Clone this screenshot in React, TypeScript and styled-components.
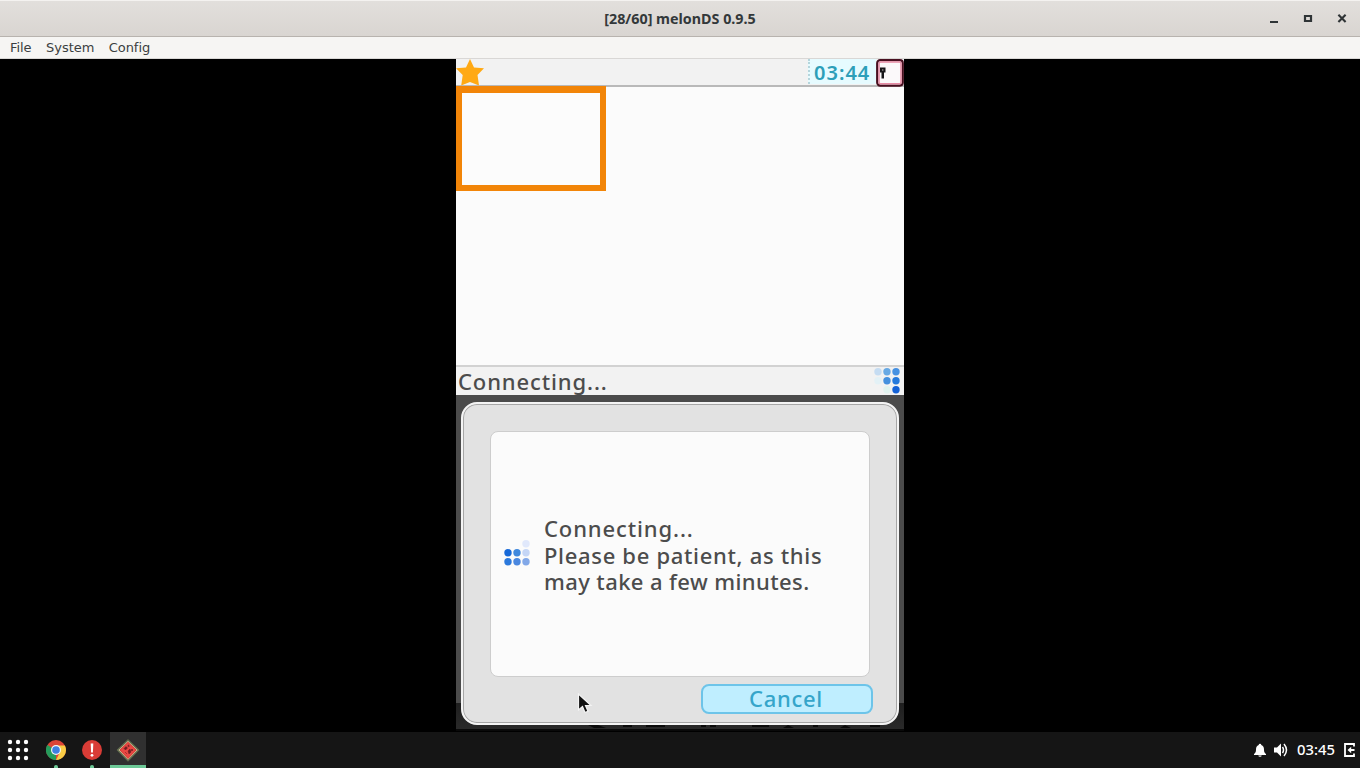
import React from 'react';
import styled, { createGlobalStyle } from 'styled-components';

const GlobalStyle = createGlobalStyle`
  * {
    box-sizing: border-box;
  }

  body {
    margin: 0;
    background: #000;
    overflow: hidden;
  }
`;

const Desktop = styled.div`
  position: relative;
  width: 1360px;
  height: 768px;
  display: flex;
  flex-direction: column;
  background: #000;
`;

const TitleBar = styled.header`
  height: 37px;
  flex-shrink: 0;
  display: grid;
  grid-template-columns: 1fr auto 1fr;
  align-items: center;
  background: linear-gradient(#e2dfdc, #d9d5d1);
  border-top: 1px solid #f4f2f0;
  border-bottom: 1px solid #b8b3ae;
`;

const WindowTitle = styled.h1`
  grid-column: 2;
  margin: 0;
  font: 700 14.3px/34px 'Noto Sans', sans-serif;
  color: #33383a;
  white-space: nowrap;
`;

const WindowButtons = styled.div`
  display: flex;
  justify-content: flex-end;
  gap: 22px;
  padding-right: 12px;

  svg {
    display: block;
  }
`;

const MenuBar = styled.nav`
  height: 22px;
  flex-shrink: 0;
  display: flex;
  gap: 14.5px;
  padding-left: 10px;
  background: #f6f5f3;
  border-bottom: 1px solid #d9d7d5;
`;

const MenuItem = styled.span`
  font: 13px/21px 'DejaVu Sans', sans-serif;
  letter-spacing: -0.05px;
  color: #3b3e40;
`;

const Viewport = styled.main`
  height: 673px;
  display: flex;
  flex-direction: column;
  align-items: center;
  background: #000;
`;

const TopScreen = styled.section`
  width: 448px;
  height: 336px;
  display: flex;
  flex-direction: column;
  background: #fbfbfb;
`;

const StatusBar = styled.div`
  height: 28px;
  display: flex;
  flex-shrink: 0;
  background: #f2f2f2;
  border-bottom: 2px solid #b9b9b9;

  svg {
    display: block;
    flex-shrink: 0;
  }
`;

const Clock = styled.div`
  width: 68px;
  height: 25px;
  margin-left: auto;
  padding-left: 4px;
  background: #e6fbff;
  border-left: 2px dotted #b5d5dc;
  color: #2d9fb9;
  font: 600 20px/27px 'Noto Sans', sans-serif;
  letter-spacing: 1px;
  white-space: nowrap;
`;

const SelectedSlot = styled.div`
  width: 150px;
  height: 105px;
  margin-top: -1px;
  flex-shrink: 0;
  border: 6px solid #f28508;
  border-top-width: 7px;
  background: #fcfcfc;
`;

const ConnectionBar = styled.div`
  height: 30px;
  margin-top: auto;
  padding: 0 4px 0 2px;
  display: flex;
  justify-content: space-between;
  background: #f2f2f2;
  border-top: 2px solid #d2d2d2;
`;

const ScreenText = styled.p<{ $tracking?: number }>`
  margin: 0;
  padding-top: 2px;
  color: #4c4c4c;
  font: 500 22px/24.5px 'Noto Sans', sans-serif;
  letter-spacing: ${({ $tracking = 0.88 }) => $tracking}px;
  white-space: nowrap;
`;

const BottomScreen = styled.section`
  width: 448px;
  height: 336px;
  padding: 7px 5px;
  background: linear-gradient(#4b4b4b 308px, #1f1f1f 308px, #292929 334px, #090909 334px);
`;

const Dialog = styled.div`
  height: 323px;
  padding: 27px 24px 6px 26px;
  display: flex;
  flex-direction: column;
  align-items: flex-end;
  border: 2px solid #f4f4f4;
  border-radius: 16px;
  background: #e2e2e2;
  box-shadow: inset 0 0 0 1px #a6a6a6;
`;

const Message = styled.div`
  width: 380px;
  height: 246px;
  margin: 0 3px 7px 0;
  padding-left: 13px;
  display: flex;
  align-items: center;
  gap: 14px;
  flex-shrink: 0;
  border: 1px solid #cdcdcd;
  border-radius: 8px;
  background: #fbfbfb;

  svg {
    margin-bottom: 3px;
  }
`;

const CancelButton = styled.button`
  width: 172px;
  height: 30px;
  flex-shrink: 0;
  padding: 0 2px 2px 0;
  border: 2px solid #6dc4e9;
  border-radius: 8px;
  background: #bfeeff;
  color: #35a5ca;
  font: 550 22px/24px 'Noto Sans', sans-serif;
  letter-spacing: 0.7px;
`;

const CoveredIcons = styled.svg`
  display: block;
  margin-left: -5px;
`;

const Taskbar = styled.footer`
  height: 36px;
  display: flex;
  align-items: stretch;
  padding-left: 2px;
  background: #151515;
`;

const Launcher = styled.div<{ $running?: boolean; $active?: boolean }>`
  width: 36px;
  display: flex;
  flex-direction: column;
  align-items: center;
  justify-content: space-between;
  padding-top: 7px;
  background: ${({ $active }) => ($active ? '#303030' : 'transparent')};

  &:first-child {
    padding-right: 4px;
  }

  &::after {
    content: '';
    width: ${({ $active }) => ($active ? '36px' : '4px')};
    height: 3px;
    border-radius: ${({ $active }) => ($active ? '0' : '2px 2px 0 0')};
    background: ${({ $running, $active }) => ($running || $active ? '#6dc997' : 'transparent')};
  }
`;

const Tray = styled.div`
  margin-left: auto;
  padding-right: 5px;
  display: flex;
  align-items: center;
  color: #fff;
  font: 500 14.8px/34px 'Noto Sans', sans-serif;

  svg {
    display: block;
    flex-shrink: 0;
  }

  time {
    margin: 0 8px;
    padding-bottom: 2px;
  }
`;

const Pointer = styled.svg`
  position: absolute;
  left: 577px;
  top: 693px;
`;

type Dot = [column: number, row: number, color: string];

const statusDots: Dot[] = [
  [0, 0, '#c5dcf2'],
  [1, 0, '#68a9e4'],
  [2, 0, '#4691e2'],
  [0, 1, '#e3f1f6'],
  [1, 1, '#4590de'],
  [2, 1, '#2579dc'],
  [1, 2, '#e0f2ee'],
  [2, 2, '#1461d6'],
];

const messageDots: Dot[] = [
  [2, 0, '#e0e8fb'],
  [0, 1, '#1769d8'],
  [1, 1, '#4088dd'],
  [2, 1, '#c5d6f6'],
  [0, 2, '#2c79dc'],
  [1, 2, '#4a87df'],
  [2, 2, '#82a8e8'],
];

function Spinner({ dots }: { dots: Dot[] }) {
  return (
    <svg width="26" height="27" viewBox="0 0 26 27">
      {dots.map(([column, row, color]) => (
        <circle key={`${column}-${row}`} cx={4 + column * 9} cy={4.8 + row * 9} r="3.7" fill={color} />
      ))}
    </svg>
  );
}

function ChromeIcon() {
  return (
    <svg width="20" height="22" viewBox="0 0 20 22">
      <circle cx="10" cy="11" r="10" fill="#dc4437" />
      <path d="M1.3 6 10 11 10 21A10 10 0 0 1 1.3 6Z" fill="#259b5b" />
      <path d="M10 6.5H18.9A10 10 0 0 1 10 21L14 13Z" fill="#f9cc45" />
      <circle cx="10" cy="11" r="5" fill="#f4f6f5" />
      <circle cx="10" cy="11" r="3.8" fill="#3f7fe2" />
    </svg>
  );
}

function AlertIcon() {
  return (
    <svg width="20" height="22" viewBox="0 0 20 22">
      <circle cx="10" cy="11" r="10" fill="#d93c36" />
      <path d="M8.7 4.5h2.6l-.4 9H9.1Z" fill="#fff" />
      <circle cx="10" cy="16.3" r="1.4" fill="#fff" />
    </svg>
  );
}

function MelonIcon() {
  return (
    <svg width="24" height="23" viewBox="0 0 24 23">
      <path d="M12 1 22.5 11 12 21.8 1.5 11Z" fill="#d8bd96" stroke="#5d6a4c" strokeWidth="1.4" strokeLinejoin="round" />
      <path d="M12 3.3 20 11 12 19.4 4 11Z" fill="#e84742" stroke="#d93d38" strokeLinejoin="round" />
      <path d="m8 9.5 2-2 1.5 1.5-2 2ZM12 12l2-2 1 3-2 2ZM12.5 6l1 .9-.9.9-1-.9ZM16 10l1 1-1 1-1-1ZM9 13l2 2" fill="#6c1c21" stroke="#6c1c21" strokeWidth=".5" />
    </svg>
  );
}

export default function App() {
  return (
    <Desktop>
      <GlobalStyle />
      <TitleBar>
        <WindowTitle>[28/60] melonDS 0.9.5</WindowTitle>
        <WindowButtons>
          <svg width="12" height="12" viewBox="0 0 12 12">
            <path d="M2 9h8" stroke="#2f3436" strokeWidth="2" />
          </svg>
          <svg width="12" height="12" viewBox="0 0 12 12">
            <path d="M3 3h6v5H3Z" fill="none" stroke="#2f3436" strokeWidth="2.2" />
          </svg>
          <svg width="12" height="12" viewBox="0 0 12 12">
            <path d="m2.4 1.8 7.2 7.2M9.6 1.8 2.4 9" stroke="#2f3436" strokeWidth="2.1" />
          </svg>
        </WindowButtons>
      </TitleBar>
      <MenuBar>
        <MenuItem>File</MenuItem>
        <MenuItem>System</MenuItem>
        <MenuItem>Config</MenuItem>
      </MenuBar>
      <Viewport>
        <TopScreen>
          <StatusBar>
            <svg width="30" height="27" viewBox="0 0 30 27">
              <path d="m14 0 4 8.5 10 .7-6.5 6.8 1.5 10.5-9-3.5-8.8 3.5 1.5-10.5L0 9.2l10-.7Z" fill="#ffa914" />
            </svg>
            <Clock>03:44</Clock>
            <svg width="28" height="28" viewBox="0 0 28 28">
              <rect x="1.2" y="1.2" width="25.6" height="25.4" rx="3" fill="#fff" stroke="#481020" strokeWidth="2.2" />
              <rect x="3" y="3" width="22" height="21.8" rx="1.5" fill="#fbf9fa" stroke="#e78aa4" strokeWidth="1.5" />
              <path d="M4 8.5h5.5v5H8v6H5.5v-6H4Z" fill="#171719" />
              <path d="M6.1 10h1.3v2H6.1Z" fill="#777" />
            </svg>
          </StatusBar>
          <SelectedSlot />
          <ConnectionBar>
            <ScreenText>Connecting...</ScreenText>
            <Spinner dots={statusDots} />
          </ConnectionBar>
        </TopScreen>
        <BottomScreen>
          <Dialog>
            <Message>
              <Spinner dots={messageDots} />
              <div>
                <ScreenText>Connecting...</ScreenText>
                <ScreenText $tracking={0.68}>Please be patient, as this</ScreenText>
                <ScreenText $tracking={0.4}>may take a few minutes.</ScreenText>
              </div>
            </Message>
            <CancelButton>Cancel</CancelButton>
          </Dialog>
          <CoveredIcons width="448" height="5" viewBox="0 0 448 5">
            <path
              d="M132 0h10l8 3h-12ZM167 0h9v2h-9ZM190 0h19v2h-19ZM245 0h5v2h-5ZM254 0h6v2h-6ZM296 0h17v2h-17ZM327 3l5-3 6 3ZM357 0h5v2h-5ZM384 3l5-3 6 3ZM414 0h10v2h-10Z"
              fill="#0a0a0a"
            />
          </CoveredIcons>
        </BottomScreen>
      </Viewport>
      <Taskbar>
        <Launcher>
          <svg width="22" height="22" viewBox="0 0 22 22" fill="#fff">
            {[3, 11, 19].map(y => [3, 11, 19].map(x => <circle key={`${x}-${y}`} cx={x} cy={y} r="2.2" />))}
          </svg>
        </Launcher>
        <Launcher $running>
          <ChromeIcon />
        </Launcher>
        <Launcher $running>
          <AlertIcon />
        </Launcher>
        <Launcher $active>
          <MelonIcon />
        </Launcher>
        <Tray>
          <svg width="14" height="16" viewBox="0 0 14 16" fill="#fff">
            <path d="M7 1.8a1.3 1.3 0 0 1 1.3 1.3c2 .6 2.7 2.4 2.7 4.6 0 2 .6 3.3 2 4.3v1H1v-1c1.4-1 2-2.3 2-4.3 0-2.2.7-4 2.7-4.6A1.3 1.3 0 0 1 7 1.8ZM5.3 13.5h3.4a1.7 1.2 0 0 1-3.4 0Z" />
          </svg>
          <svg width="22" height="16" viewBox="0 0 22 16">
            <path d="M7 5.5h3l4-4v13l-4-4H7Z" fill="#fff" />
            <path d="M15.5 5q2 3 0 6M17 2q5 6 0 12" fill="none" stroke="#fff" strokeWidth="1.5" />
          </svg>
          <time>03:45</time>
          <svg width="12" height="16" viewBox="0 0 12 16">
            <path d="M11 4.5V2H2v12h9v-2.5M11.5 8H7" fill="none" stroke="#fff" strokeWidth="1.8" />
            <path d="M8.2 4.8v6.4L4.5 8Z" fill="#fff" />
          </svg>
        </Tray>
      </Taskbar>
      <Pointer width="18" height="22" viewBox="0 0 18 22">
        <path d="M1.5 1v16l4-3.5 2.5 6 3-1.3-2.5-5.7H14Z" fill="#111" stroke="#f4f4f4" strokeWidth="1.2" />
      </Pointer>
    </Desktop>
  );
}
